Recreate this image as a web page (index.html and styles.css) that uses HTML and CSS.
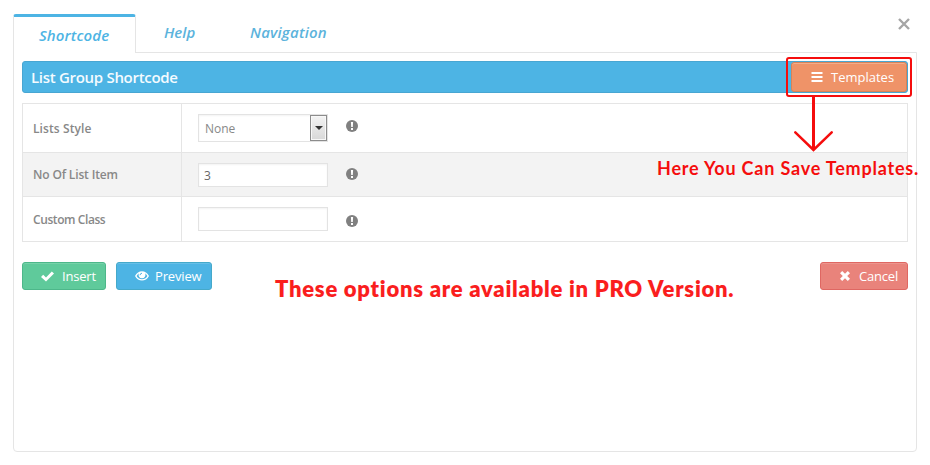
FILE: index.html
```html
<!DOCTYPE html>
<html lang="en">
<head>
<meta charset="utf-8">
<title>List Group Shortcode</title>
<link rel="stylesheet" href="styles.css">
</head>
<body>
<div class="dialog">
  <nav class="tabs">
    <a class="tab active"><span class="t-short">Shortcode</span></a>
    <a class="tab help"><span class="t-help">Help</span></a>
    <a class="tab nav"><span class="t-nav">Navigation</span></a>
    <svg class="close" viewBox="0 0 12 12"><path d="M1 1L11 11M11 1L1 11"/></svg>
  </nav>
  <main class="panel">
    <header class="bar">
      <h1>List Group Shortcode</h1>
      <button class="btn templates"><svg class="icon" width="12" height="12" viewBox="0 0 12 12"><path d="M0.5 1h11v2h-11zM0.5 5h11v2h-11zM0.5 9h11v2h-11z"/></svg><span>Templates</span></button>
    </header>
    <div class="form">
      <div class="row r1">
        <label><span class="l1">Lists Style</span></label>
        <div class="field"><div class="box select"><span>None</span><i class="drop"><svg width="8" height="4" viewBox="0 0 8 4"><path d="M0 0h8L4 4z"/></svg></i></div>
        <svg class="info" viewBox="0 0 12 12"><circle cx="6" cy="6" r="6"/><path d="M4.9 2h2.2l-.3 5H5.2zM5 8h2v2H5z"/></svg></div>
      </div>
      <div class="row r2">
        <label><span class="l2">No Of List Item</span></label>
        <div class="field"><div class="box"><span class="num">3</span></div>
        <svg class="info" viewBox="0 0 12 12"><circle cx="6" cy="6" r="6"/><path d="M4.9 2h2.2l-.3 5H5.2zM5 8h2v2H5z"/></svg></div>
      </div>
      <div class="row r3">
        <label><span class="l3">Custom Class</span></label>
        <div class="field"><div class="box"></div>
        <svg class="info" viewBox="0 0 12 12"><circle cx="6" cy="6" r="6"/><path d="M4.9 2h2.2l-.3 5H5.2zM5 8h2v2H5z"/></svg></div>
      </div>
    </div>
    <footer class="actions">
      <button class="btn insert"><svg class="icon" width="13" height="11" viewBox="0 0 13 11"><path d="M0 6L2.2 3.8L5 6.4L10.8 0.4L13 2.6L5 10.6z"/></svg><span>Insert</span></button>
      <button class="btn preview"><svg class="icon" width="14" height="10" viewBox="0 0 14 10"><path fill-rule="evenodd" d="M0 5C3-1.3 11-1.3 14 5C11 11 3 11 0 5zM1.6 5C4 9.4 10 9.4 12.4 5Q11.5 3.3 10 2.3A3.4 3.4 0 1 1 4 2.3Q2.5 3.3 1.6 5z"/><path class="glint" d="M5 4.2Q5.2 2.3 7 2.2"/></svg><span>Preview</span></button>
      <button class="btn cancel"><svg class="icon" width="10" height="10" viewBox="0 0 10 10"><path d="M2.2 0L5 2.8L7.8 0L10 2.2L7.2 5L10 7.8L7.8 10L5 7.2L2.2 10L0 7.8L2.8 5L0 2.2z"/></svg><span>Cancel</span></button>
    </footer>
  </main>
</div>
<div class="highlight"></div>
<svg class="arrow" width="40" height="56" viewBox="0 0 40 56"><path d="M20.5 0V53"/><path class="head" d="M2.3 35.3L20.5 53L38.7 35.3"/></svg>
<p class="note save">Here You Can Save Templates.</p>
<p class="note pro">These options are available in PRO Version.</p>
</body>
</html>
```
FILE: styles.css
```css
* { box-sizing: border-box; }
body { margin: 0; width: 930px; height: 465px; overflow: hidden; position: relative; background: #fff; font-family: "Open Sans", sans-serif; font-size: 13px; color: #888; }
span, h1, p { white-space: nowrap; }
.dialog { padding: 14px 13px 0; }
.tabs { display: flex; height: 38px; align-items: flex-start; }
.tab { color: #5cb3dc; font: italic 600 15px/20px "Open Sans", sans-serif; }
.tab.active { width: 123px; height: 39px; border: 1px solid #e5e5e5; border-top: 3px solid #4db4e4; border-bottom: 0; border-radius: 3px 3px 0 0; background: #fff; padding: 8px 0 0 25px; position: relative; z-index: 1; color: #4db4e4; }
.t-short { letter-spacing: .1px; }
.t-nav { letter-spacing: .2px; }
.tab.help { width: 86px; padding: 8px 0 0 28px; }
.tab.nav { padding: 8px 0 0 28px; }
.close { width: 12px; height: 12px; margin: 4px 7px 0 auto; fill: none; stroke: #a5a5a5; stroke-width: 2.4; }
.panel { height: 400px; border: 1px solid #e5e5e5; border-radius: 0 0 4px 4px; padding: 8px 8px 0; }
.bar { height: 32px; background: #4db4e4; border: 1px solid #48a6d2; border-radius: 3px; display: flex; justify-content: space-between; padding-left: 8px; }
h1 { margin: 0; color: #f4fbff; font-size: 15px; line-height: 31px; font-weight: 600; letter-spacing: -.3px; }
.btn { display: flex; align-items: center; height: 28px; padding: 0; border: 1px solid; border-radius: 3px; color: #fff; font: 13px/26px "Open Sans", sans-serif; box-shadow: inset 0 1px 0 rgba(255,255,255,.15); }
.icon { fill: currentColor; flex: none; }
.btn.templates { width: 116px; height: 30px; background: #ef9368; border-color: #d98257; padding-left: 19px; font-size: 13px; gap: 8px; box-shadow: inset 0 1px 0 #f3ad8b; }
.form { margin-top: 10px; border: 1px solid #e5e5e5; height: 139px; }
.row { display: flex; }
.r1 { height: 48px; }
.r2 { height: 45px; background: #f3f3f3; border-top: 1px solid #e5e5e5; border-bottom: 1px solid #e5e5e5; }
.r3 { height: 44px; }
label { width: 159px; border-right: 1px solid #e5e5e5; padding-left: 10px; font-weight: 600; font-size: 12px; display: flex; align-items: center; }
.l1 { letter-spacing: .1px; }
.l2 { letter-spacing: -.15px; }
.l3 { letter-spacing: -.42px; }
.field { display: flex; align-items: flex-start; padding-left: 16px; }
.box { width: 130px; height: 24px; border: 1px solid #e3e3e3; background: #fff; box-shadow: inset 0 1px 2px rgba(0,0,0,.05); display: flex; align-items: center; padding-left: 5px; font-size: 12px; }
.r1 .box { height: 28px; margin-top: 10px; }
.r2 .box { margin-top: 10px; }
.r3 .box { margin-top: 10px; }
.num { color: #666; }
.select { justify-content: space-between; padding-left: 6px; }
.drop { width: 17px; height: 26px; border: 1px solid #8c8c8c; background: linear-gradient(#f3f3f3, #d8d8d8); box-shadow: inset 0 0 0 1px #f8f8f8; display: flex; align-items: center; justify-content: center; fill: #333; }
.info { width: 12px; height: 12px; margin: 16px 0 0 18px; fill: #808080; }
.info path { fill: #fff; }
.r1 .info { margin-top: 16px; }
.r2 .info { margin-top: 15px; }
.r3 .info { margin-top: 18px; }
.actions { display: flex; margin-top: 20px; }
.insert { width: 84px; background: #5fca9b; border-color: #4db78a; padding-left: 18px; gap: 8px; }
.insert span { letter-spacing: -.2px; }
.preview { width: 96px; margin-left: 10px; background: #4db4e4; border-color: #45a9ca; padding-left: 18px; gap: 6px; }
.preview span { letter-spacing: -.15px; }
.glint { fill: none; stroke: #4db4e4; stroke-width: 1; }
.cancel { width: 88px; margin-left: auto; background: #e9837b; border-color: #df6762; padding-left: 19px; gap: 9px; }
.cancel span { letter-spacing: -.2px; }
.highlight { position: absolute; left: 786px; top: 57px; width: 126px; height: 40px; border: 2px solid #f50d0d; border-radius: 3px; }
.arrow { position: absolute; left: 793px; top: 97px; fill: none; stroke: #f50d0d; stroke-width: 3; }
.arrow .head { stroke-width: 2.5; stroke-linecap: round; }
.note { position: absolute; margin: 0; font-family: Lato, sans-serif; font-weight: 700; }
.save { left: 657px; top: 156px; font-size: 18px; line-height: 24px; color: #f50d0d; letter-spacing: .8px; }
.pro { left: 275px; top: 275px; font-size: 22px; line-height: 28px; color: #fa1e1e; font-weight: 800; letter-spacing: .75px; }
```
